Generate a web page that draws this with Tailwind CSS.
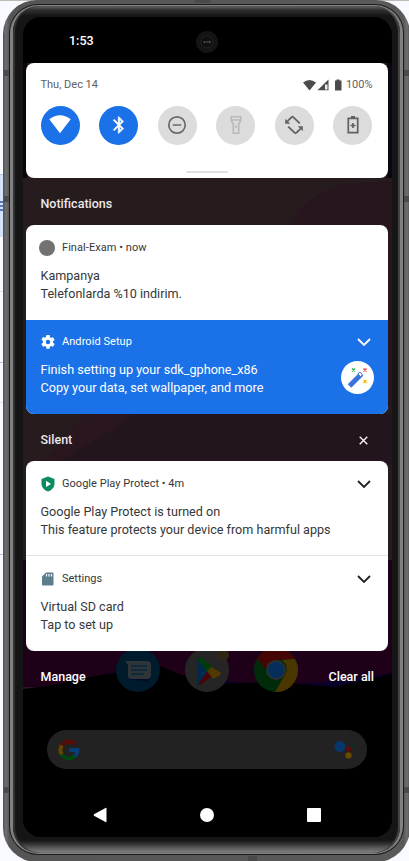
<!DOCTYPE html>
<html lang="en">
<head>
<meta charset="utf-8">
<title>Notification shade</title>
<script src="https://cdn.jsdelivr.net/npm/@tailwindcss/browser@4"></script>
</head>
<body class="relative h-[861px] w-[409px] overflow-hidden bg-[#f9faff] font-[Roboto,sans-serif]">
<!-- desktop behind the device -->
<div class="absolute inset-0">
  <div class="h-px w-full bg-[#b9bdb6]"></div>
  <svg class="absolute left-0 top-0" width="10" height="861"><path d="M0 174h10v63H0z" fill="#d3e3fd"/><path d="M0 174.500h10M0 362.500h10M0 554.500h10" stroke="#b4c2dc"/><path d="M0 291.500h10M0 402.500h10" stroke="#dfe4ec"/><path d="M0 202h3M0 206h3M0 210h3" stroke="#3155a6" stroke-width="1.500"/></svg>
</div>
<!-- device frame -->
<div class="absolute left-[3px] top-0 h-[862px] w-[407px] rounded-[34px] bg-[linear-gradient(90deg,#505050_0,#707070_3px,#555_6px,#5a5a5a_401px,#707070_404px,#505050_407px)] pt-[4px] pb-[7px] pl-[6px] pr-[6px]">
  <div class="h-full rounded-[29px] bg-[#1c1c1c] p-px">
    <div class="h-full rounded-[28px] bg-[#808080] pt-px pr-[3px] pb-px pl-[3px]">
      <div class="h-full rounded-[26px] bg-[linear-gradient(180deg,#666_0,#303030_4px,#151515_10px,#151515_834px,#333_838px,#5a5a5a_842px,#858585_847px)] pt-[11px] pl-[10px] pr-[8px] shadow-[inset_2px_0_1px_#333,inset_-2px_0_1px_#444]">
        <div class="relative h-[820px] w-[369px] overflow-hidden rounded-[18px] bg-black">
          <!-- dimmed home screen -->
          <svg class="absolute inset-0" width="369" height="820" viewBox="23 17 369 820">
            <path d="M23 63h369v640H23z" fill="#261b1d"/>
            <path d="M23 63h4v115h-4z" fill="#0c0408"/><path d="M387 63h5v115h-5z" fill="#0c0611"/>
            <path d="M392 181l-50 3c-20 7-38 18-47 30-6 8-8 15-6 22L392 410z" fill="#28161f"/>
            <path d="M85 414h307v50H35c20-12 30-22 50-50z" fill="#22151d"/><path d="M85 414h48c-20 20-50 30-75 50H35c20-12 30-22 50-50z" fill="#2a161f"/>
            <path d="M23 560h369v127H23z" fill="#1e0018"/>
            <path d="M220 681l60 4 55-4 57-8v20H200z" fill="#0b0028"/>
            <path d="M23 689l30-4 52-11 20-2 35-6 25 10 30 8 60-2 60 5 57-13v163H23z" fill="#000"/>
            <circle cx="138" cy="670" r="22" fill="#001b2c"/>
            <path d="M128 679l19 3 4-5-20-1z" fill="#050b2b"/><path d="M125 661h22q4 0 4 4v10q0 4-4 4h-16q-3 0-3-3v-11z" fill="#2e3539"/><path d="M131 666h16M131 670h16M131 674h13" stroke="#08243c" stroke-width="1.500"/>
            <circle cx="207" cy="670" r="22" fill="#252525"/><circle cx="223" cy="655" r="6" fill="#2e2717"/>
            <path d="M197 657v27q0 4 3-1l11-13z" fill="#002950"/><path d="M197 659q2-4 6 0l9 8-5 5z" fill="#003b0a"/><path d="M199 683l8-11 5 4-10 8q-3 2-3-1z" fill="#4b0303"/><path d="M207 671l4-4 9 5q2 2-1 4l-6 3z" fill="#513900"/>
            <circle cx="276" cy="670" r="22" fill="#002b0a"/><path d="M257 659a22 22 0 0138 0l-19 1-10 9z" fill="#440605"/><path d="M295 659a22 22 0 01-20 33l11-19q3-7-4-13z" fill="#4a3700"/><circle cx="276" cy="670" r="10" fill="#2c3032"/><circle cx="276" cy="670" r="8" fill="#052e5b"/>
          </svg>
          <div class="absolute left-[173px] top-[14px] flex size-[22px] items-center justify-center rounded-full bg-[#141414]">
            <svg width="14" height="14" viewBox="0 0 14 14"><circle cx="7" cy="7" r="6" fill="#101010" stroke="#222"/><circle cx="4.500" cy="7" r="1" fill="#55554a"/><circle cx="7" cy="7" r="1" fill="#34433a"/><circle cx="9.500" cy="7" r="1" fill="#90583a"/></svg>
          </div>
          <div class="relative flex h-full flex-col pl-[3px] pr-[4px]">
            <div class="h-[46px] pl-[43px] pt-[16px] text-[12.5px] leading-[16px] font-medium text-white">1:53</div>
            <!-- quick settings -->
            <section class="flex h-[115px] flex-col rounded-[8px] bg-white pl-[14.5px] pr-[15.500px] pt-[13px]">
              <div class="flex h-[17px] items-center justify-between pt-px text-[11px] text-[#5f6062]">
                <span>Thu, Dec 14</span>
                <span class="flex items-center"><svg class="mr-[3px]" width="40" height="13" viewBox="303 78 40 13"><path d="M303 81.500q6.500-5 13 0L309.500 89.500z" fill="#4b4b4d"/><path d="M317.500 89.300L328.500 78.500v10.800z" fill="#4b4b4d"/><path d="M325 83.500h2.500v5H325z" fill="#eee"/><path d="M335 79.500h1.500v-1h3v1h2v10H335z" fill="#4b4b4d"/></svg>100%</span>
              </div>
              <div class="mt-[12.500px] flex justify-between">
                <div class="flex size-[39px] items-center justify-center rounded-full bg-[#1b72e8]"><svg width="24" height="24" viewBox="0 0 24 24"><path d="M1.300 6.300q10.700-8 21.400 0L12 20.300z" fill="#fff"/></svg></div>
                <div class="flex size-[39px] items-center justify-center rounded-full bg-[#1b72e8]"><svg width="20" height="20" viewBox="0 0 24 24"><path d="M17.700 7.700L12 2h-1v7.600L6.400 5 5 6.400l5.600 5.600L5 17.600 6.400 19l4.600-4.600V22h1l5.700-5.700-4.300-4.300zM13 5.800l1.900 1.900L13 9.600zm1.900 10.500L13 18.200v-3.800z" fill="#fff" stroke="#fff" stroke-width=".5"/></svg></div>
                <div class="flex size-[39px] items-center justify-center rounded-full bg-[#dcdcdc]"><svg width="20" height="20" viewBox="0 0 20 20" fill="none" stroke="#68696b" stroke-width="1.700"><circle cx="10" cy="10" r="8.200"/><path d="M5.700 10h8.600"/></svg></div>
                <div class="flex size-[39px] items-center justify-center rounded-full bg-[#dcdcdc]"><svg width="20" height="20" viewBox="0 0 20 20" fill="none" stroke="#b9b9b9" stroke-width="1.600"><path d="M5.300 1.800h9.400v4l-2 3v9.400H7.300V8.800l-2-3zM5.300 5h9.400"/><path d="M10 10.500v2.500"/></svg></div>
                <div class="flex size-[39px] items-center justify-center rounded-full bg-[#dcdcdc]"><svg width="20" height="20" viewBox="0 0 20 20" fill="none" stroke="#616163" stroke-width="1.800"><path d="M15.800 8.300L9.500 2.300q-1-1-2 0L3.500 6.200M4.200 11.700l6.300 6q1 1 2 0l4-3.900"/><path d="M1.200 3.800v5h5zM18.800 16.200v-5h-5z" fill="#616163" stroke="none"/></svg></div>
                <div class="flex size-[39px] items-center justify-center rounded-full bg-[#dcdcdc]"><svg width="20" height="20" viewBox="0 0 20 20" fill="none" stroke="#5f6062" stroke-width="1.700"><path d="M5.300 3.300h9.400v14.400H5.300zM10 8v5M7.500 10.500h5"/><path d="M8 2h4" stroke-width="2"/></svg></div>
              </div>
              <div class="mx-auto mt-[26.500px] h-[2px] w-[42px] rounded-full bg-[#e0e0e0]"></div>
            </section>
            <h2 class="flex h-[47px] items-center pl-[14.500px] pt-[5px] text-[12.5px] font-medium text-[#ece8ea]">Notifications</h2>
            <!-- alerting notifications -->
            <section class="h-[189px] overflow-hidden rounded-[8px] bg-white">
              <article class="h-[94.5px] px-[14.500px] pt-[14px] text-[#36373a]">
                <div class="flex h-[17px] items-center text-[11px] tracking-[0.06px]"><span class="-ml-[2px] mr-[7.500px] size-[16px] rounded-full bg-[#727272]"></span><span class="pt-[2px]">Final-Exam • now</span></div>
                <div class="mt-[11px] text-[12.6px] leading-[18px]"><p>Kampanya</p><p>Telefonlarda %10 indirim.</p></div>
              </article>
              <article class="relative h-[94.5px] bg-[#1b72e8] px-[14.500px] pt-[14px] text-white">
                <div class="flex h-[17px] items-center text-[11px] tracking-[0.06px]"><svg class="mr-[7.500px]" width="14" height="14" viewBox="2 2 20 20"><path fill="#fff" fill-rule="evenodd" d="M19.140 12.940c.04-.3.060-.61.060-.94s-.02-.64-.07-.94l2.030-1.580a.49.49 0 00.120-.61l-1.920-3.320a.49.49 0 00-.59-.22l-2.390.96a7 7 0 00-1.620-.94l-.36-2.540A.48.480 0 0013.920 2h-3.840a.48.480 0 00-.48.410l-.36 2.540a7 7 0 00-1.620.94l-2.390-.96a.48.480 0 00-.59.220L2.720 8.470a.48.480 0 00.120.610l2.030 1.580a6 6 0 000 2.280l-2.030 1.580a.49.490 0 00-.12.610l1.920 3.320c.12.220.37.290.59.220l2.390-.96c.5.380 1.030.7 1.620.94l.36 2.540c.05.240.24.410.48.410h3.840c.24 0 .44-.17.470-.41l.36-2.540a7 7 0 001.620-.94l2.390.96c.22.080.47 0 .59-.22l1.920-3.320a.48.480 0 00-.12-.61zM12 15.200A3.200 3.200 0 1112 8.800a3.200 3.200 0 010 6.400z"/></svg><span class="pt-px">Android Setup</span><svg class="ml-auto mr-[3px]" width="14" height="8" viewBox="0 0 14 8" fill="none" stroke="#fff" stroke-width="1.800"><path d="M1 1l6 6 6-6"/></svg></div>
                <div class="mt-[10px] text-[12.65px] leading-[18px]"><p>Finish setting up your sdk_gphone_x86</p><p>Copy your data, set wallpaper, and more</p></div>
                <svg class="absolute right-[14px] top-[41px]" width="33" height="33" viewBox="0 0 33 33"><circle cx="16.500" cy="16.500" r="16.500" fill="#fff"/><path d="M8.500 25L20.500 13" stroke="#3c73da" stroke-width="5"/><path d="M16.800 13l2-2 2.700 2.700-2 2z" fill="#fff" stroke="#3c73da"/><path d="M11 7.500l3 3m0-3l-3 3" stroke="#34a853" stroke-width="1.400"/><path d="M22.500 7.500l3 3m0-3l-3 3" stroke="#ea4335" stroke-width="1.400"/><path d="M22.500 19l3 3m0-3l-3 3" stroke="#fbbc04" stroke-width="1.400"/></svg>
              </article>
            </section>
            <div class="flex h-[47px] items-center justify-between pl-[14.500px] pr-[20.500px] pt-[5px] text-[12.5px] font-medium text-[#ece8ea]"><h2>Silent</h2><svg width="9" height="9" viewBox="0 0 9 9" stroke="#f4f1f2" stroke-width="1.400"><path d="M.7.7l7.600 7.600M8.300.7L.7 8.300"/></svg></div>
            <!-- silent notifications -->
            <section class="h-[190px] overflow-hidden rounded-[8px] bg-white text-[#36373a]">
              <article class="h-[95px] border-b border-[#e2e2e2] px-[14.500px] pt-[14px]">
                <div class="flex h-[17px] items-center text-[11px] tracking-[0.03px]"><svg class="mr-[7.500px]" width="14" height="16" viewBox="0 0 14 16"><path d="M7 .5l6.500 2.400v5q0 5-6.500 7.600Q.5 12.900.5 7.900v-5z" fill="#0b8b60"/><path d="M5 4.700l5 3.200-5 3.200z" fill="#fff"/></svg><span class="pt-[2px]">Google Play Protect • 4m</span><svg class="ml-auto mr-[3px]" width="14" height="8" viewBox="0 0 14 8" fill="none" stroke="#202124" stroke-width="1.800"><path d="M1 1l6 6 6-6"/></svg></div>
                <div class="mt-[11px] text-[12.6px] leading-[18px]"><p>Google Play Protect is turned on</p><p>This feature protects your device from harmful apps</p></div>
              </article>
              <article class="h-[95px] px-[14.500px] pt-[14px]">
                <div class="flex h-[17px] items-center text-[11px]"><svg class="mr-[7.500px]" width="14" height="14" viewBox="0 0 14 14"><path d="M5 .5h6.500q1 0 1 1v11q0 1-1 1H2q-1 0-1-1v-8z" fill="#5d7c8c"/><path d="M5.500 2v2.500M8 2v2.500M10.500 2v2.500" stroke="#fff" stroke-width="1.200"/></svg><span class="pt-[2px]">Settings</span><svg class="ml-auto mr-[3px]" width="14" height="8" viewBox="0 0 14 8" fill="none" stroke="#202124" stroke-width="1.800"><path d="M1 1l6 6 6-6"/></svg></div>
                <div class="mt-[11px] text-[12.6px] leading-[18px]"><p>Virtual SD card</p><p>Tap to set up</p></div>
              </article>
            </section>
            <div class="flex h-[52px] items-center justify-between pl-[14.500px] pr-[14px] text-[12.5px] font-medium text-white"><span>Manage</span><span>Clear all</span></div>
            <!-- search bar -->
            <div class="ml-[20.500px] mt-[27px] flex h-[39px] w-[320px] items-center justify-between rounded-full bg-[#222] pl-[11px] pr-[12px]">
              <svg width="22" height="22" viewBox="0 0 22 22" fill="none" stroke-width="4"><path d="M3.800 6.500A8.500 8.500 0 0117 5" stroke="#590b08"/><path d="M3.800 6.500a8.500 8.500 0 000 9" stroke="#644800"/><path d="M3.800 15.500a8.500 8.500 0 0013 1.500" stroke="#004611"/><path d="M11 11h8.500a8.500 8.500 0 01-2.700 6" stroke="#073d78"/></svg>
              <svg width="22" height="22" viewBox="0 0 22 22"><circle cx="7" cy="7.500" r="5.500" fill="#07376a"/><circle cx="15.500" cy="10" r="2.700" fill="#580e0b"/><circle cx="15.500" cy="16.500" r="3.200" fill="#674900"/><circle cx="19.500" cy="6.800" r="1.300" fill="#043e10"/></svg>
            </div>
            <!-- navigation -->
            <nav class="mt-[38px] flex h-[16px] items-center justify-between pl-[66.500px] pr-[67.500px]">
              <svg width="14" height="16" viewBox="0 0 14 16"><path d="M13.500 1.500v13q0 1-1 .5L1 8.700q-.8-.7 0-1.400L12.500 1q1-.5 1 .5z" fill="#fff"/></svg>
              <span class="size-[14px] rounded-full bg-white"></span>
              <span class="size-[14px] rounded-[1px] bg-white"></span>
            </nav>
          </div>
        </div>
      </div>
    </div>
  </div>
</div>
<!-- antenna bands -->
<svg class="absolute inset-0" width="409" height="861" fill="#4a4a4a"><path d="M4 70h5v6H4zM4 196h5v6H4zM4 787h5v6H4zM404 70h5v6h-5zM404 196h5v6h-5zM404 787h5v6h-5zM195 0h16v3h-16zM248 856h9v5h-9z"/></svg>
</body>
</html>
